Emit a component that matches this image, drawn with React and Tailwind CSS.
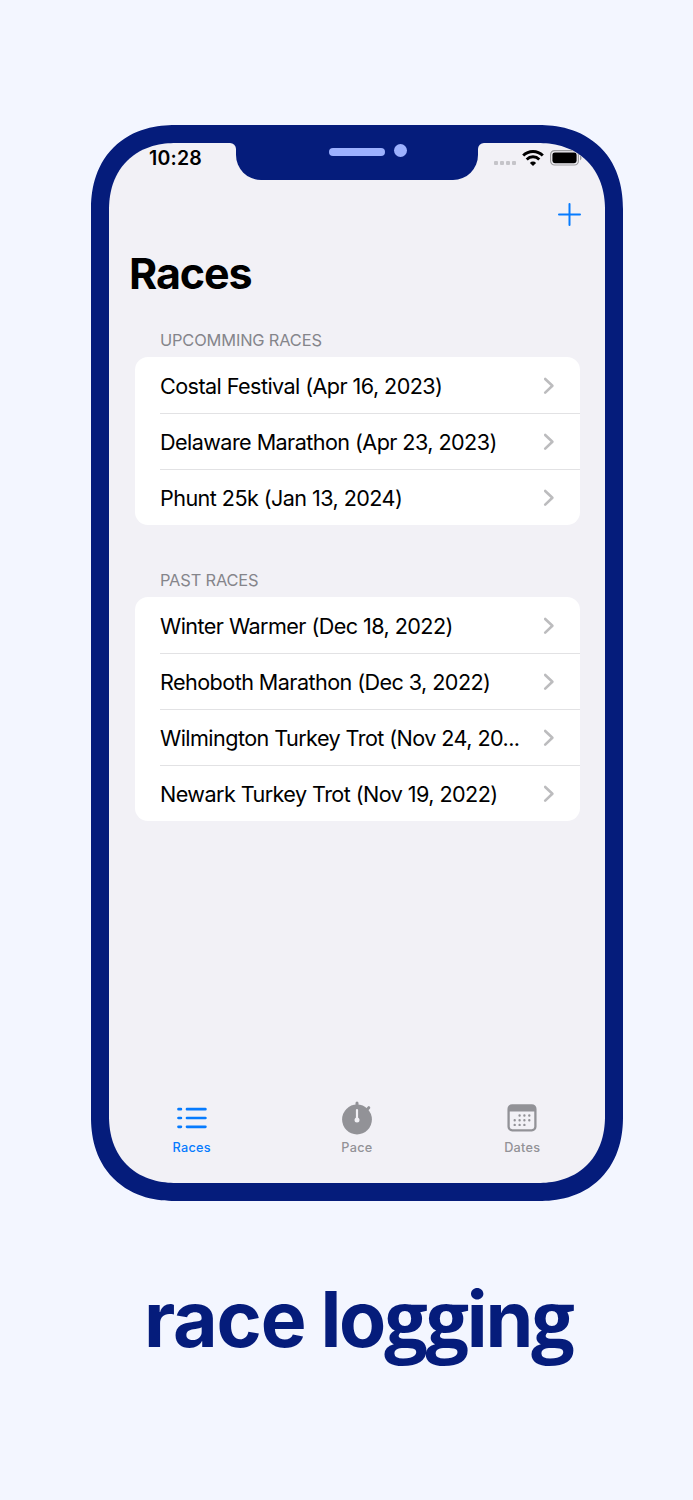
const upcoming = [
  "Costal Festival (Apr 16, 2023)",
  "Delaware Marathon (Apr 23, 2023)",
  "Phunt 25k (Jan 13, 2024)",
];

const past = [
  "Winter Warmer (Dec 18, 2022)",
  "Rehoboth Marathon (Dec 3, 2022)",
  "Wilmington Turkey Trot (Nov 24, 20...",
  "Newark Turkey Trot (Nov 19, 2022)",
];

function Chevron() {
  return (
    <svg width="12" height="18" viewBox="0 0 12 18" fill="none" className="shrink-0">
      <path d="M2.2 2 9.4 8.800l-7.200 6.800" stroke="#bcbcbe" strokeWidth="2.6" strokeLinecap="round" strokeLinejoin="round" />
    </svg>
  );
}

function WifiIcon() {
  return (
    <svg width="22" height="16" viewBox="0 0 22 16" fill="none" stroke="#000" strokeWidth="2.9">
      <path d="M1.2 5.6a13.8 13.8 0 0 1 19.6 0" />
      <path d="M4.7 9.4a8.9 8.9 0 0 1 12.6 0" />
      <path d="M11 16 7.9 12.900a4.4 4.4 0 0 1 6.2 0z" fill="#000" stroke="none" />
    </svg>
  );
}

function BatteryIcon() {
  return (
    <svg width="32" height="16" viewBox="0 0 32 16">
      <rect x="0.6" y="0.6" width="27.8" height="14.4" rx="4" fill="none" stroke="#9d9da0" strokeWidth="1.2" />
      <rect x="2.4" y="2.4" width="24.2" height="10.8" rx="2.4" fill="#000" />
      <path d="M30 5.4c2 .8 2 4 0 4.8z" fill="#9d9da0" />
    </svg>
  );
}

function ListIcon() {
  return (
    <svg width="30" height="22" viewBox="0 0 30 22" stroke="currentColor" strokeWidth="2.7" strokeLinecap="round">
      <path d="M1.5 2.200h2.400M1.5 11h2.400M1.5 19.800h2.400M10 2.200h18.400M10 11h18.400M10 19.800h18.400" />
    </svg>
  );
}

function StopwatchIcon() {
  return (
    <svg width="32" height="34" viewBox="0 0 32 34" fill="none">
      <circle cx="16" cy="18.5" r="14.9" fill="currentColor" />
      <path d="M16 4V2M26.3 8.2l1.5-1.5" stroke="currentColor" strokeWidth="3" strokeLinecap="round" />
      <path d="M16 9v9.5" stroke="#f2f1f6" strokeWidth="2.2" strokeLinecap="round" />
      <circle cx="16" cy="18.9" r="2.5" fill="#f2f1f6" />
    </svg>
  );
}

function CalendarIcon() {
  return (
    <svg width="30" height="28" viewBox="0 0 30 28" fill="none">
      <rect x="1.600" y="1.3" width="26.8" height="25" rx="3.6" stroke="currentColor" strokeWidth="2.3" />
      <path d="M1.600 7.400V5a3.6 3.6 0 0 1 3.6-3.6h19.6A3.6 3.6 0 0 1 28.400 5v2.400z" fill="currentColor" />
      <path
        d="M12.600 11.500h0M17.400 11.500h0M22.300 11.500h0M7.700 16.200h0M12.600 16.200h0M17.400 16.200h0M22.300 16.200h0M7.700 20.900h0M12.600 20.900h0M17.400 20.900h0"
        stroke="currentColor"
        strokeWidth="2.4"
        strokeLinecap="round"
      />
    </svg>
  );
}

function RaceSection({ title, races }) {
  return (
    <section className="pl-[26px] pr-[25px]">
      <h2 className="pl-[25px] pt-[1px] h-[28px] text-[16.4px] leading-[20px] tracking-[-0.15px] text-[#85858b]">{title}</h2>
      <ul className="rounded-[13px] bg-white overflow-hidden">
        {races.map((race, i) => (
          <li key={race} className="pl-[25px]">
            <div
              className={`h-[56px] flex items-center justify-between pr-[25px] ${
                i > 0 ? "pt-px border-t border-[#e2e2e4]" : "pt-[2px]"
              }`}
            >
              <span className="whitespace-nowrap text-[21.6px] tracking-[-0.57px] text-black">{race}</span>
              <Chevron />
            </div>
          </li>
        ))}
      </ul>
    </section>
  );
}

function Tab({ label, active, children }) {
  return (
    <div className={`flex-1 flex flex-col items-center ${active ? "text-[#067bfe]" : "text-[#929297]"}`}>
      <div className="h-[36px] flex items-center justify-center">{children}</div>
      <span className="mt-[4px] text-[12.7px] leading-[16px] font-medium tracking-[0.3px]">{label}</span>
    </div>
  );
}

function Notch() {
  return (
    <div className="absolute top-0 left-[127px] w-[242px] h-[37px] rounded-b-[25px] bg-[#051c7b]">
      {/* Small fillets where the notch meets the bezel */}
      <svg width="6" height="6" viewBox="0 0 6 6" className="absolute top-0 -left-[6px]">
        <path d="M0 0h6v6a6 6 0 0 0-6-6z" fill="#051c7b" />
      </svg>
      <svg width="6" height="6" viewBox="0 0 6 6" className="absolute top-0 -right-[6px]">
        <path d="M6 0H0v6a6 6 0 0 1 6-6z" fill="#051c7b" />
      </svg>
      <div className="flex items-center pl-[93px] pt-[1px]">
        <div className="mt-[3px] w-[56px] h-[8px] rounded-full bg-[#9db1fe]" />
        <div className="ml-[9px] w-[13px] h-[13px] rounded-full bg-[#9db1fe]" />
      </div>
    </div>
  );
}

export default function App() {
  return (
    <div className="w-[693px] h-[1500px] bg-[#f3f6ff] pt-[125px] font-['Inter',sans-serif] overflow-hidden">
      <div className="ml-[91px] w-[532px] h-[1076px] p-[18px] rounded-[84px] [corner-shape:superellipse(1.15)] bg-[#051c7b]">
        <div className="relative w-full h-full flex flex-col rounded-[67px] [corner-shape:superellipse(1.15)] overflow-hidden bg-[#f2f1f6]">
          <Notch />

          {/* Status bar */}
          <div className="h-[30px] pl-[40px] pr-[23px] flex items-center justify-between">
            <span className="text-[19.500px] leading-[30px] font-semibold tracking-[0.2px]">10:28</span>
            <div className="flex items-center">
              <div className="flex gap-[2px] mt-[9px] mr-[6px]">
                <span className="w-[4px] h-[4px] rounded-[1px] bg-[#c5c4c9]" />
                <span className="w-[4px] h-[4px] rounded-[1px] bg-[#c5c4c9]" />
                <span className="w-[4px] h-[4px] rounded-[1px] bg-[#c5c4c9]" />
                <span className="w-[4px] h-[4px] rounded-[1px] bg-[#c5c4c9]" />
              </div>
              <WifiIcon />
              <div className="ml-[6px]">
                <BatteryIcon />
              </div>
            </div>
          </div>

          <div className="h-[74px] pt-[30px] pr-[24px] flex justify-end">
            <svg width="23" height="23" viewBox="0 0 23 23" stroke="#067bfe" strokeWidth="2" strokeLinecap="round">
              <path d="M11.500 1v21M1 11.500h21" />
            </svg>
          </div>

          <h1 className="pl-[20px] text-[43px] leading-[52px] font-bold tracking-[-1.1px] text-black">Races</h1>

          <div className="mt-[30px] flex flex-col gap-[44px]">
            <RaceSection title="UPCOMMING RACES" races={upcoming} />
            <RaceSection title="PAST RACES" races={past} />
          </div>

          <nav className="mt-auto mb-[27px] flex">
            <Tab label="Races" active>
              <ListIcon />
            </Tab>
            <Tab label="Pace">
              <StopwatchIcon />
            </Tab>
            <Tab label="Dates">
              <CalendarIcon />
            </Tab>
          </nav>
        </div>
      </div>

      <p className="mt-[67px] ml-[144px] whitespace-nowrap text-[77px] leading-[100px] font-[660] tracking-[-2.200px] text-[#051c7b]">
        <span className="tracking-[-1.200px] [word-spacing:-2px]">race </span>lo
        <span className="font-['Open_Sans'] font-bold">gg</span>in
        <span className="font-['Open_Sans'] font-bold">g</span>
      </p>
    </div>
  );
}
